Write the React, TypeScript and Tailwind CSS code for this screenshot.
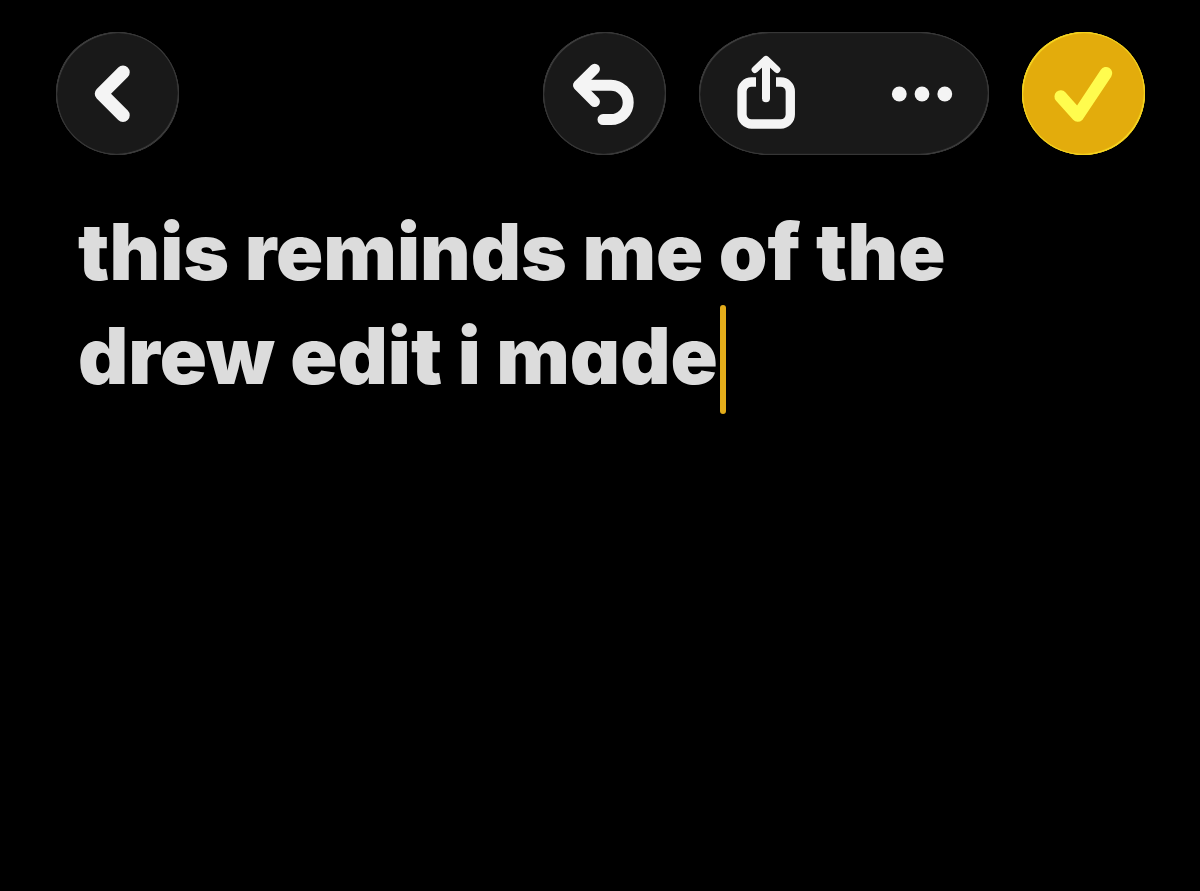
import type { ReactNode } from "react";
import clsx from "clsx";

const GLASS =
  "bg-[#191919] shadow-[inset_0_0_0_1px_#363636,inset_1px_1px_1px_#505050,inset_-1px_-1px_1px_#505050]";

const GOLD =
  "bg-[#e3ac0c] shadow-[inset_0_0_0_1px_#f3d01e,inset_1px_1px_1px_#fde62c,inset_-1px_-1px_1px_#fde62c]";

interface RoundButtonProps {
  label: string;
  className: string;
  children: ReactNode;
}

function RoundButton({ label, className, children }: RoundButtonProps) {
  return (
    <button
      type="button"
      aria-label={label}
      className={clsx("size-[123px] shrink-0 rounded-full", className)}
    >
      <svg
        viewBox="0 0 123 123"
        className="size-full"
        fill="none"
        stroke="currentColor"
        strokeLinecap="round"
        strokeLinejoin="round"
        aria-hidden="true"
      >
        {children}
      </svg>
    </button>
  );
}

function Toolbar() {
  return (
    <header className="flex items-center justify-between">
      <RoundButton label="Back" className={clsx(GLASS, "text-[#f4f4f4]")}>
        <path strokeWidth={13.5} d="M67 40.2 45.5 61.7 67 83.3" />
      </RoundButton>

      <div className="flex items-center gap-[33px]">
        <RoundButton label="Undo" className={clsx(GLASS, "text-[#f4f4f4]")}>
          <path strokeWidth={10.5} d="M51.7 37 35.3 53.2 51.7 69.7" />
          <path strokeWidth={11} d="M36 53.2H68A17.2 17.2 0 0 1 68 87.6H60" />
        </RoundButton>

        {/* Share + more */}
        <div className={clsx("flex h-[123px] w-[290px] rounded-[70px/62px] text-[#f4f4f4]", GLASS)}>
          <button type="button" aria-label="Share" className="flex-1">
            <svg
              viewBox="0 0 145 123"
              className="size-full"
              fill="none"
              stroke="currentColor"
              strokeLinejoin="round"
              aria-hidden="true"
            >
              <path
                strokeWidth={9.3}
                d="M57 50H52.5A9.5 9.5 0 0 0 43 59.5V82.5A9.5 9.5 0 0 0 52.5 92H81.8A9.5 9.5 0 0 0 91.3 82.5V59.5A9.5 9.5 0 0 0 81.8 50H77"
              />
              <path strokeWidth={8} strokeLinecap="round" d="M67 29.5V66.2" />
              <path strokeWidth={6.8} strokeLinecap="round" d="M56 37.6 67 27.2 78 37.6" />
            </svg>
          </button>
          <button type="button" aria-label="More" className="flex-1">
            <svg viewBox="0 0 145 123" className="size-full" fill="currentColor" aria-hidden="true">
              <circle cx="55.3" cy="62" r="7.4" />
              <circle cx="78" cy="62" r="7.4" />
              <circle cx="100.8" cy="62" r="7.4" />
            </svg>
          </button>
        </div>

        <RoundButton label="Done" className={clsx(GOLD, "text-[#fffc4e]")}>
          <path strokeWidth={12.5} d="M38.7 64.5 55.8 83.6 84 41.2" />
        </RoundButton>
      </div>
    </header>
  );
}

export default function App() {
  return (
    <div className="min-h-screen bg-black pt-8 pr-[55px] pl-14">
      <Toolbar />
      <main className="px-[22px] pt-[45px]">
        <div
          role="textbox"
          aria-label="Note"
          contentEditable
          suppressContentEditableWarning
          className="max-w-[940px] font-['Inter',sans-serif] text-[78px] leading-[104px] font-black text-[#dcdcdc] outline-none [font-feature-settings:'cv11']"
        >
          this reminds me of the drew edit i made
          {/* Caret */}
          <span className="relative">
            <span className="absolute -top-[3px] left-0.5 h-[109px] w-1.5 rounded-full bg-[#e3ac1a]" />
          </span>
        </div>
      </main>
    </div>
  );
}
